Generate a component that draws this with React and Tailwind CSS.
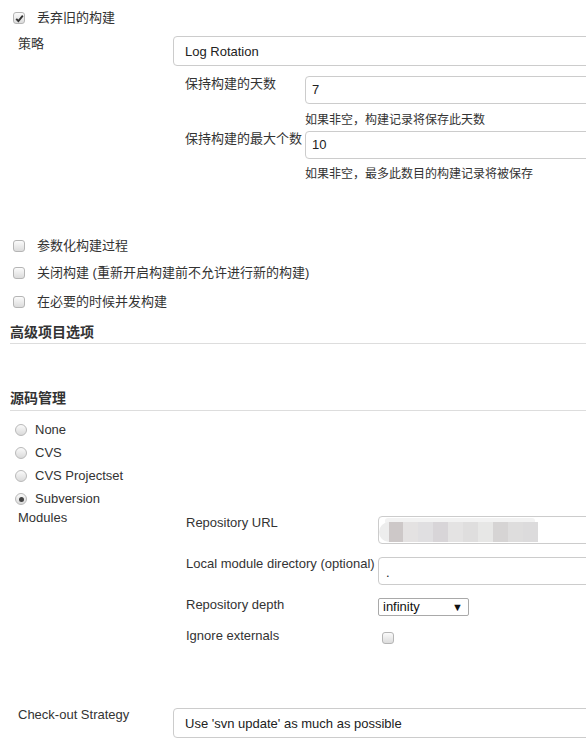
import React from 'react';

const font = { fontFamily: '"Liberation Sans", Arial, "Noto Sans CJK SC", sans-serif' };

function Check({ checked }) {
  return (
    <span className="inline-flex items-center justify-center w-[12px] h-[12px] rounded-[3px] border border-[#b5b5b5] bg-gradient-to-b from-[#fbfbfb] to-[#dcdcdc] shrink-0">
      {checked && (
        <svg width="9" height="9" viewBox="0 0 9 9">
          <path d="M1.2 4.8 L3.4 7 L7.8 1.6" stroke="#333" strokeWidth="1.9" fill="none" />
        </svg>
      )}
    </span>
  );
}

function Radio({ checked }) {
  return (
    <span className="inline-flex items-center justify-center w-[12px] h-[12px] rounded-full border border-[#b9b9b9] bg-gradient-to-b from-[#fafafa] to-[#dadada] shrink-0">
      {checked && <span className="w-[5px] h-[5px] rounded-full bg-[#444]" />}
    </span>
  );
}

function Box({ children }) {
  return (
    <div className="h-[28px] -mr-[20px] border border-[#cccccc] rounded-[4px] bg-white flex items-center pl-[6px] text-[13px] text-[#222]">
      {children}
    </div>
  );
}

export default function App() {
  return (
    <div className="w-[586px] h-[745px] overflow-hidden bg-white text-[13px] text-[#333] leading-[16px]" style={font}>
      {/* discard old builds */}
      <div className="flex items-center h-[16px] mt-[10px] pl-[13px]">
        <Check checked />
        <span className="ml-[12px]">丢弃旧的构建</span>
      </div>

      <div className="flex mt-[10px]">
        <div className="w-[173px] pl-[18px]">策略</div>
        <div className="flex-1">
          <div className="h-[30px] -mr-[20px] border border-[#cccccc] rounded-[4px] flex items-center pl-[11px] pt-[1px] text-[#222]">Log Rotation</div>
          <div className="grid grid-cols-[120px_1fr] mt-[10px] pl-[12px]">
            <div>保持构建的天数</div>
            <div>
              <Box>7</Box>
              <div className="mt-[8px] text-[12px]">如果非空，构建记录将保存此天数</div>
            </div>
            <div className="mt-[3px] whitespace-nowrap">保持构建的最大个数</div>
            <div className="mt-[3px]">
              <Box>10</Box>
              <div className="mt-[7px] text-[12px]">如果非空，最多此数目的构建记录将被保存</div>
            </div>
          </div>
        </div>
      </div>

      <div className="flex items-center h-[16px] mt-[56px] pl-[13px]">
        <Check />
        <span className="ml-[12px]">参数化构建过程</span>
      </div>
      <div className="flex items-center h-[16px] mt-[11px] pl-[13px]">
        <Check />
        <span className="ml-[12px]">关闭构建 (重新开启构建前不允许进行新的构建)</span>
      </div>
      <div className="flex items-center h-[16px] mt-[13px] pl-[13px]">
        <Check />
        <span className="ml-[12px]">在必要的时候并发构建</span>
      </div>

      <div className="ml-[10px] mt-[14px] pb-[3px] border-b border-[#dddddd] font-bold text-[14px] text-[#333]">高级项目选项</div>

      <div className="ml-[10px] mt-[46px] pb-[4px] border-b border-[#dddddd] font-bold text-[14px] text-[#333]">源码管理</div>

      <div className="flex flex-col gap-[7px] mt-[11px] pl-[15px]">
        {['None', 'CVS', 'CVS Projectset', 'Subversion'].map((r) => (
          <div key={r} className="flex items-center h-[16px]">
            <Radio checked={r === 'Subversion'} />
            <span className="ml-[8px]">{r}</span>
          </div>
        ))}
      </div>

      <div className="flex">
        <div className="w-[173px] pl-[18px] pt-[3px]">Modules</div>
        <div className="flex-1 pl-[13px] pt-[9px]">
          <div className="grid grid-cols-[192px_1fr] gap-y-[13px]">
            <div className="-mt-[1px]">Repository URL</div>
            <div className="h-[28px] -mr-[20px] border border-[#cccccc] rounded-[4px] relative overflow-hidden">
              <div className="absolute left-[6px] top-[1px] w-[150px] h-[6px] bg-[#f2f2f2] rounded-full" />
              <div className="absolute left-[0px] top-[5px] flex h-[20px]">
                <div className="w-[10px] bg-[#ededed] rounded-l-full" />
                <div className="w-[14px] bg-[#cdc8c8]" />
                <div className="w-[15px] bg-[#e4e2e2]" />
                <div className="w-[15px] bg-[#e0dfe1]" />
                <div className="w-[15px] bg-[#d8d5d8]" />
                <div className="w-[15px] bg-[#e4e3e3]" />
                <div className="w-[15px] bg-[#dfdede]" />
                <div className="w-[15px] bg-[#e7e7e6]" />
                <div className="w-[15px] bg-[#d6d4d4]" />
                <div className="w-[15px] bg-[#dedddd]" />
                <div className="w-[15px] bg-[#dcdbdc]" />
              </div>
            </div>
            <div className="-mt-[1px]">Local module directory (optional)</div>
            <div className="h-[28px] -mr-[20px] border border-[#cccccc] rounded-[4px] pl-[7px] pt-[7px] text-[#222] leading-[16px]">.</div>
            <div className="-mt-[1px]">Repository depth</div>
            <div>
              <div className="w-[91px] h-[18px] border border-[#a9a9a9] rounded-[2px] flex items-center justify-between pl-[4px] pr-[5px] text-[#111]">
                <span>infinity</span>
                <span className="text-[11px] leading-[11px]">▼</span>
              </div>
            </div>
            <div className="-mt-[1px]">Ignore externals</div>
            <div className="pl-[4px] pt-[3px]">
              <Check />
            </div>
          </div>
        </div>
      </div>

      <div className="flex mt-[60px]">
        <div className="w-[173px] pl-[18px] -mt-[1px]">Check-out Strategy</div>
        <div className="flex-1">
          <div className="h-[30px] -mr-[20px] border border-[#cccccc] rounded-[4px] flex items-center pl-[11px] pt-[1px] text-[#222]">
            Use 'svn update' as much as possible
          </div>
        </div>
      </div>
    </div>
  );
}
